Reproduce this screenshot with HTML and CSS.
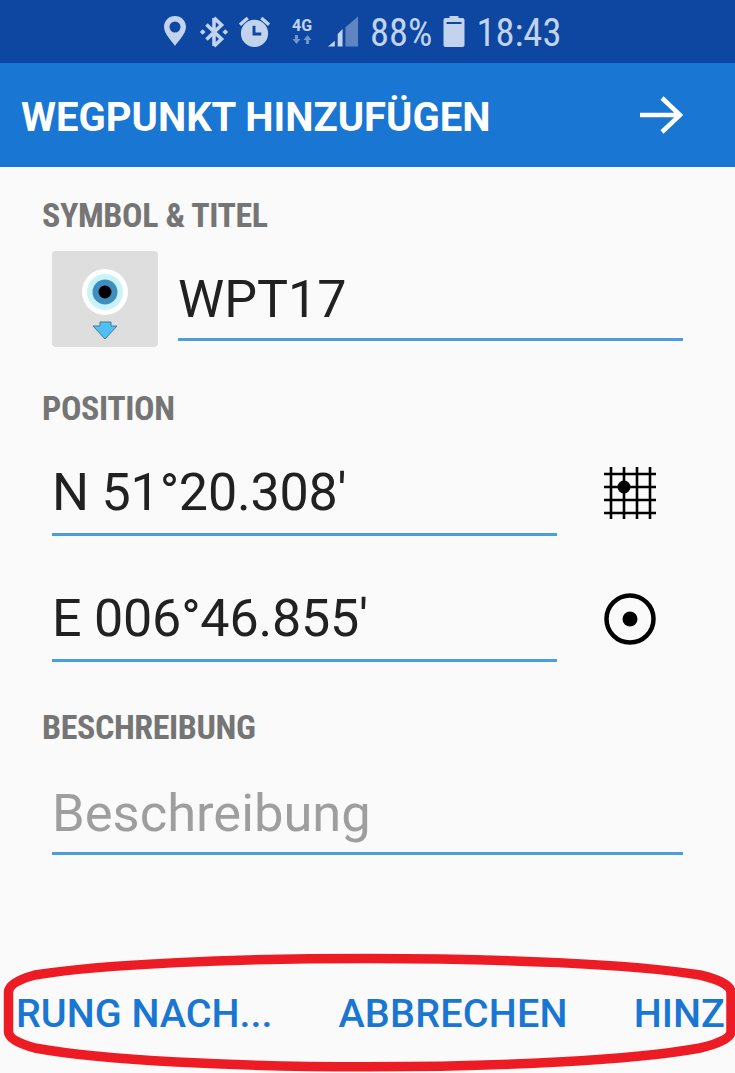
FILE: index.html
```html
<!DOCTYPE html>
<html lang="de">
<head>
<meta charset="utf-8">
<title>Wegpunkt hinzufügen</title>
<link rel="stylesheet" href="styles.css">
</head>
<body>
<div class="screen">
  <header class="status">
    <svg class="i-pin" viewBox="0 0 24 32"><path fill-rule="evenodd" d="M12 1C5.600 1 1 5.800 1 12c0 7 8 14 11 19 3-5 11-12 11-19C23 5.800 18.400 1 12 1zm0 5.500a5.500 5.500 0 1 1 0 11 5.500 5.500 0 0 1 0-11z"/></svg>
    <svg class="i-bt" viewBox="0 0 30 34"><path d="M15 2l8 7.500L7 25M15 32l8-7.500L7 9M15 2v30" fill="none" stroke-width="3.800"/><path class="dots" d="M0 17l3-3 3 3-3 3zM24 17l3-3 3 3-3 3z"/></svg>
    <svg class="i-alarm" viewBox="0 0 34 34"><path fill-rule="evenodd" d="M17 5a14 14 0 1 1 0 28 14 14 0 0 1 0-28zM15 11v10h9v-3h-6v-7z"/><path class="strokes" d="M2 10l8-7M32 10l-8-7" fill="none" stroke-width="3.500"/></svg>
    <div class="net"><span class="net-label">4G</span>
      <svg class="i-arrows" viewBox="0 0 20 9"><path d="M3 0h3v4h2.500L4.500 9 .5 4H3zM14 9h3V5h2.500L15.500 0l-4 5H14z"/></svg>
    </div>
    <svg class="i-signal" viewBox="0 0 32 32"><path d="M0 31l7-6v6z"/><path d="M10 31V18l5-5v18z"/><path class="dim" d="M18 31V11L31 0v31z"/></svg>
    <span class="status-text pct">88%</span>
    <svg class="i-batt" viewBox="0 0 21 31"><path fill-rule="evenodd" d="M6 0h9v2h4a2 2 0 0 1 2 2v25a2 2 0 0 1-2 2H2a2 2 0 0 1-2-2V4a2 2 0 0 1 2-2h4zM3 6v2h15V6z"/></svg>
    <span class="status-text time">18:43</span>
  </header>
  <div class="appbar">
    <h1 class="title">WEGPUNKT HINZUFÜGEN</h1>
    <svg class="i-next" viewBox="0 0 44 40"><path d="M1 20h40M23 3l18 17-18 17" fill="none" stroke="#fff" stroke-width="4.500"/></svg>
  </div>
  <main class="form">
    <h2 class="label">SYMBOL &amp; TITEL</h2>
    <div class="row row-symbol">
      <div class="symbol">
        <svg class="i-wpt" viewBox="0 0 106 96">
          <circle cx="53" cy="41" r="23" fill="#fff"/>
          <circle cx="53" cy="41" r="18" fill="#c9f3f8"/>
          <circle cx="53" cy="41" r="12.500" fill="#3e8fc0"/>
          <circle cx="53" cy="41" r="6.500" fill="#000"/>
          <path d="M48 71h11v4h6L53 88 41 75h7z" fill="#4fc0f5" stroke="#4a7a90" stroke-width="1"/>
        </svg>
      </div>
      <div class="field field-title">WPT17</div>
    </div>
    <h2 class="label label-pos">POSITION</h2>
    <div class="row row-pos">
      <div class="field field-pos">N 51°20.308'</div>
      <svg class="i-grid" viewBox="0 0 52 52"><path d="M7 0v52M20 0v52M33 0v52M46 0v52M0 7h52M0 20h52M0 33h52M0 46h52" fill="none" stroke="#000" stroke-width="2.600"/><circle cx="20" cy="20" r="6.500"/></svg>
    </div>
    <div class="row row-pos row-pos2">
      <div class="field field-pos">E 006°46.855'</div>
      <svg class="i-target" viewBox="0 0 52 52"><circle cx="26" cy="26" r="23.500" fill="none" stroke="#000" stroke-width="4.500"/><circle cx="26" cy="26" r="7.500"/></svg>
    </div>
    <h2 class="label label-desc">BESCHREIBUNG</h2>
    <div class="field field-desc">Beschreibung</div>
  </main>
  <footer class="actions">
    <span class="action">RUNG NACH...</span>
    <span class="action a-mid">ABBRECHEN</span>
    <span class="action a-last">HINZ</span>
  </footer>
  <svg class="oval" viewBox="0 0 735 1073"><path d="M8.500 992Q9 982 35 975C170 953 565 953 700 975Q730 982 731 992V1032Q730 1041 700 1048C565 1073 170 1073 35 1048Q9 1041 8.500 1032Z" fill="none" stroke="#ed1c24" stroke-width="9.500"/></svg>
</div>
</body>
</html>
```
FILE: styles.css
```css
* { box-sizing: border-box; }
html, body { margin: 0; padding: 0; }
body { font-family: Roboto, "Noto Sans", sans-serif; background: #fafafa; }
.screen { position: relative; width: 735px; height: 1073px; overflow: hidden; background: #fafafa; display: flex; flex-direction: column; }

.status { height: 63px; background: #0d47a1; color: #c3d3ee; display: flex; align-items: center; padding-left: 163px; fill: #c3d3ee; stroke: none; }
.status svg { display: block; flex: none; }
.i-pin { width: 24px; height: 32px; margin-top: -2px; }
.i-bt { width: 30px; height: 32px; margin-left: 12px; stroke: #c3d3ee; }
.i-bt .dots { stroke: none; }
.i-alarm { width: 33px; height: 33px; margin-left: 9px; }
.strokes { stroke: #c3d3ee; }
.net { width: 26px; margin-left: 18px; display: flex; flex-direction: column; align-items: center; margin-top: -3px; }
.net-label { font-size: 16px; font-weight: 700; line-height: 18px; }
.i-arrows { width: 20px; height: 9px; opacity: .55; }
.i-signal { width: 31px; height: 32px; margin-left: 13px; }
.dim { opacity: .45; }
.status-text { font-size: 38.5px; line-height: 40px; margin-top: 2px; font-stretch: condensed; }
.i-batt { width: 22px; height: 31px; margin-left: 11px; }
.pct { margin-left: 11px; }
.time { margin-left: 11px; }

.appbar { height: 104px; background: #1976d2; display: flex; align-items: center; justify-content: space-between; padding: 0 52px 0 21px; }
.title { margin: 4px 0 0; font-size: 40px; font-weight: 700; color: #fff; white-space: nowrap; }
.i-next { width: 44px; height: 40px; display: block; }

.form { flex: 1; padding: 30px 52px 0 42px; }
.label { margin: 0; font-size: 34px; line-height: 36px; font-weight: 700; color: #757575; letter-spacing: -0.4px; font-stretch: condensed; }
.row { display: flex; }
.row-symbol { margin: 18px 0 0 10px; gap: 20px; align-items: flex-end; }
.symbol { width: 106px; height: 96px; background: #dedede; border-radius: 4px; }
.i-wpt { width: 106px; height: 96px; display: block; }
.field { font-size: 52px; line-height: 62px; color: #212121; border-bottom: 3px solid #4a9fd8; }
.field-title { width: 505px; height: 88px; padding-top: 16px; margin-bottom: 6px; }
.label-pos { margin-top: 43px; }
.row-pos { margin: 29px 0 0 10px; justify-content: space-between; align-items: center; width: 604px; }
.row-pos2 { margin-top: 45px; }
.field-pos { width: 505px; height: 81px; padding-top: 7px; letter-spacing: -0.2px; }
.i-grid, .i-target { width: 52px; height: 52px; display: block; margin-bottom: 6px; }
.label-desc { margin-top: 47px; }
.field-desc { width: 631px; margin: 29px 0 0 10px; height: 81px; padding-top: 8px; color: #9e9e9e; font-size: 52.5px; }

.actions { height: 120px; flex: none; display: flex; font-size: 39.5px; font-weight: 500; color: #1976d2; padding: 41px 0 0 16px; }
.action { white-space: nowrap; line-height: 40px; flex: none; }
.a-mid { margin-left: 66px; letter-spacing: 0.2px; }
.a-last { margin-left: 66px; }

.oval { position: absolute; left: 0; top: 0; width: 735px; height: 1073px; pointer-events: none; }
```
